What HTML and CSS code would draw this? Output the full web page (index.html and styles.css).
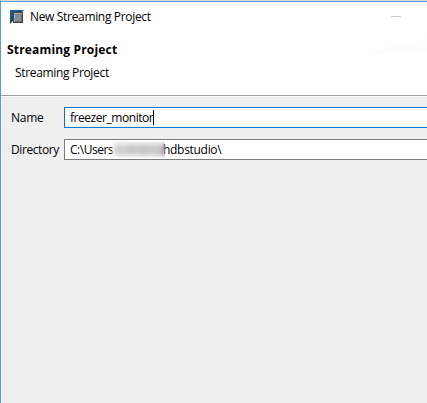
FILE: index.html
```
<!DOCTYPE html>
<html lang="en">
<head>
<meta charset="utf-8">
<title>New Streaming Project</title>
<link rel="stylesheet" href="styles.css">
</head>
<body>
<main class="window">
  <header class="titlebar">
    <svg class="app-icon" viewBox="0 0 14 14" width="14" height="14" aria-hidden="true">
      <defs><linearGradient id="blue" x2="1" y2="1"><stop offset="0" stop-color="#1d64a0"/><stop offset="1" stop-color="#102f55"/></linearGradient></defs>
      <path d="M0 0H14L0 14Z" fill="url(#blue)"/>
      <path d="M3 2H13V13H3Z" fill="#44474a"/>
      <path d="M4 3H12V12H4Z" fill="#aaa"/>
      <path d="M5 4H12V12H5Z" fill="#66696b"/>
      <path d="M5 4H11V11H5Z" fill="#8b8c8e"/>
    </svg>
    <span class="title">New Streaming Project</span>
    <span class="minimize"></span>
  </header>
  <section class="banner">
    <div class="heading-row">
      <h1 class="heading">Streaming Project</h1>
      <svg class="swoosh" width="55" height="14" viewBox="0 0 55 14" aria-hidden="true"><path d="M0 13Q28 4 55 0V14H0Z" fill="#fcfdff"/></svg>
    </div>
    <p class="subheading">Streaming Project</p>
  </section>
  <form class="form">
    <label class="label name">Name</label>
    <div class="field focused"><span class="name-value">freezer_monitor</span><span class="caret"></span></div>
    <label class="label directory">Directory</label>
    <div class="field"><span class="path-start">C:\Users</span><span class="redacted"></span><span class="path-end">hdbstudio\</span></div>
  </form>
</main>
</body>
</html>
```
FILE: styles.css
```
* { box-sizing: border-box; }
body { margin: 0; font: 12px/16px "Open Sans", "Noto Sans", sans-serif; color: #000; background: #efefef; overflow: hidden; }
h1, p { margin: 0; }
span, h1, p, label { white-space: pre; }
.window { height: 403px; border-left: 1px solid #5b9bd5; border-top: 1px solid #d9d9d9; display: flex; flex-direction: column; }
.titlebar { height: 31px; border-top: 1px solid #5b9bd5; background: #fff; display: flex; align-items: center; padding: 0 26px 0 9px; }
.app-icon { margin: -1px 6px 0 0; }
.title { letter-spacing: -0.33px; }
.minimize { width: 10px; height: 1px; margin-left: auto; margin-top: -1px; background: #ccc; }
.banner { height: 64px; background: #fff; border-bottom: 1px solid #a0a0a0; padding: 6px 0 0 6px; }
.heading-row { display: flex; justify-content: space-between; height: 27px; }
.swoosh { margin-top: 1px; }
.heading { font-size: 12px; line-height: 24px; font-weight: 700; letter-spacing: 0.17px; }
.subheading { padding-left: 8px; line-height: 18px; margin-top: -1px; letter-spacing: -0.33px; }
.form { flex: 1; border-top: 1px solid #fff; padding: 10px 0 0 10px; display: grid; grid-template-columns: 53px 1fr; grid-auto-rows: 21px; row-gap: 11px; align-content: start; }
.label { line-height: 21px; }
.name { letter-spacing: -0.25px; }
.directory { letter-spacing: -0.42px; }
.field { height: 21px; background: #fff; border: 1px solid #7a7a7a; border-right: 0; padding-left: 5px; display: flex; align-items: center; }
.focused { border-color: #0078d7; }
.name-value { letter-spacing: -0.45px; }
.caret { width: 1px; height: 15px; background: #000; }
.path-start { width: 43px; letter-spacing: -0.45px; }
.path-end { letter-spacing: -0.3px; }
.redacted { width: 53px; height: 17px; margin: 0 -2px 0 -1px; filter: blur(1px); z-index: 1; background: linear-gradient(90deg, #eee, #d0d0d0 12%, #cfcfcf 25%, #c8c8c8 38%, #cdcdcd 49%, #c6c6c6 62%, #cbcbcb 72%, #c8c8c8 85%, #c8bcc2 94%, #a77991); -webkit-mask-image: linear-gradient(#0003, #000 40%, #000 65%, #0003); mask-image: linear-gradient(#0003, #000 40%, #000 65%, #0003); }
```
